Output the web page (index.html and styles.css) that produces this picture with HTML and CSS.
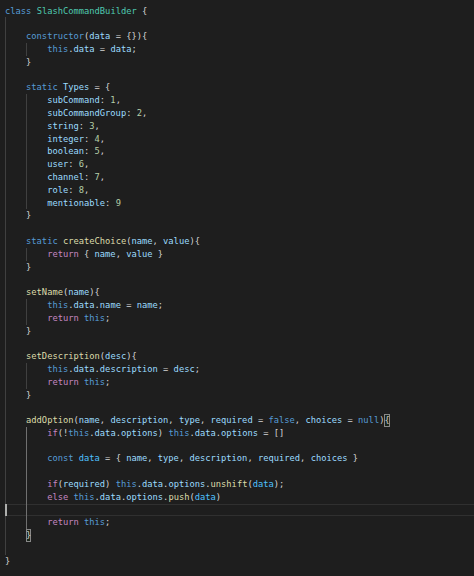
FILE: index.html
```html
<!DOCTYPE html>
<html>
<head>
<meta charset="utf-8">
<link rel="stylesheet" href="styles.css">
</head>
<body>
<div class="editor">
<div class="l"><span class="k">class</span> <span class="c">SlashCommandBuilder</span> {</div>
<div class="l"><span class="g">    </span></div>
<div class="l"><span class="g">    </span><span class="k">constructor</span>(<span class="v">data</span> = {}){</div>
<div class="l"><span class="g">    </span><span class="g">    </span><span class="k">this</span>.<span class="v">data</span> = <span class="v">data</span>;</div>
<div class="l"><span class="g">    </span>}</div>
<div class="l"><span class="g">    </span></div>
<div class="l"><span class="g">    </span><span class="k">static</span> <span class="v">Types</span> = {</div>
<div class="l"><span class="g">    </span><span class="g">    </span><span class="v">subCommand</span>: <span class="n">1</span>,</div>
<div class="l"><span class="g">    </span><span class="g">    </span><span class="v">subCommandGroup</span>: <span class="n">2</span>,</div>
<div class="l"><span class="g">    </span><span class="g">    </span><span class="v">string</span>: <span class="n">3</span>,</div>
<div class="l"><span class="g">    </span><span class="g">    </span><span class="v">integer</span>: <span class="n">4</span>,</div>
<div class="l"><span class="g">    </span><span class="g">    </span><span class="v">boolean</span>: <span class="n">5</span>,</div>
<div class="l"><span class="g">    </span><span class="g">    </span><span class="v">user</span>: <span class="n">6</span>,</div>
<div class="l"><span class="g">    </span><span class="g">    </span><span class="v">channel</span>: <span class="n">7</span>,</div>
<div class="l"><span class="g">    </span><span class="g">    </span><span class="v">role</span>: <span class="n">8</span>,</div>
<div class="l"><span class="g">    </span><span class="g">    </span><span class="v">mentionable</span>: <span class="n">9</span></div>
<div class="l"><span class="g">    </span>}</div>
<div class="l"><span class="g">    </span></div>
<div class="l"><span class="g">    </span><span class="k">static</span> <span class="f">createChoice</span>(<span class="v">name</span>, <span class="v">value</span>){</div>
<div class="l"><span class="g">    </span><span class="g">    </span><span class="p">return</span> { <span class="v">name</span>, <span class="v">value</span> }</div>
<div class="l"><span class="g">    </span>}</div>
<div class="l"><span class="g">    </span></div>
<div class="l"><span class="g">    </span><span class="f">setName</span>(<span class="v">name</span>){</div>
<div class="l"><span class="g">    </span><span class="g">    </span><span class="k">this</span>.<span class="v">data</span>.<span class="v">name</span> = <span class="v">name</span>;</div>
<div class="l"><span class="g">    </span><span class="g">    </span><span class="p">return</span> <span class="k">this</span>;</div>
<div class="l"><span class="g">    </span>}</div>
<div class="l"><span class="g">    </span></div>
<div class="l"><span class="g">    </span><span class="f">setDescription</span>(<span class="v">desc</span>){</div>
<div class="l"><span class="g">    </span><span class="g">    </span><span class="k">this</span>.<span class="v">data</span>.<span class="v">description</span> = <span class="v">desc</span>;</div>
<div class="l"><span class="g">    </span><span class="g">    </span><span class="p">return</span> <span class="k">this</span>;</div>
<div class="l"><span class="g">    </span>}</div>
<div class="l"><span class="g">    </span></div>
<div class="l"><span class="g">    </span><span class="f">addOption</span>(<span class="v">name</span>, <span class="v">description</span>, <span class="v">type</span>, <span class="v">required</span> = <span class="k">false</span>, <span class="v">choices</span> = <span class="k">null</span>)<span class="bm">{</span></div>
<div class="l"><span class="g">    </span><span class="g a">    </span><span class="p">if</span>(!<span class="k">this</span>.<span class="v">data</span>.<span class="v">options</span>) <span class="k">this</span>.<span class="v">data</span>.<span class="v">options</span> = []</div>
<div class="l"><span class="g">    </span><span class="g a">    </span></div>
<div class="l"><span class="g">    </span><span class="g a">    </span><span class="k">const</span> <span class="cn">data</span> = { <span class="v">name</span>, <span class="v">type</span>, <span class="v">description</span>, <span class="v">required</span>, <span class="v">choices</span> }</div>
<div class="l"><span class="g">    </span><span class="g a">    </span></div>
<div class="l"><span class="g">    </span><span class="g a">    </span><span class="p">if</span>(<span class="v">required</span>) <span class="k">this</span>.<span class="v">data</span>.<span class="v">options</span>.<span class="f">unshift</span>(<span class="cn">data</span>);</div>
<div class="l"><span class="g">    </span><span class="g a">    </span><span class="p">else</span> <span class="k">this</span>.<span class="v">data</span>.<span class="v">options</span>.<span class="f">push</span>(<span class="cn">data</span>)</div>
<div class="l cl"><span class="g cur">    </span><span class="g a">    </span></div>
<div class="l"><span class="g">    </span><span class="g a">    </span><span class="p">return</span> <span class="k">this</span>;</div>
<div class="l"><span class="g">    </span><span class="bm">}</span></div>
<div class="l"><span class="g">    </span></div>
<div class="l">}</div>
</div>
</body>
</html>
```

FILE: styles.css
```css
body {
  margin: 0;
  background: #1e1e1e;
}

.editor {
  padding: 4.6px 0 0 5px;
  font-family: "DejaVu Sans Mono", monospace;
  font-size: 8.75px;
  line-height: 12.81px;
  color: #d4d4d4;
}

.l {
  white-space: pre;
  height: 12.81px;
}

.g {
  display: inline-block;
  vertical-align: top;
  width: 4ch;
  height: 12.81px;
  box-shadow: inset 1px 0 #404040;
}

.g.a {
  box-shadow: inset 1px 0 #707070;
}

.g.cur {
  box-shadow: inset 2px 0 #aeafad;
}

.cl {
  box-shadow: inset 0 1px #303030, inset 0 -1px #303030;
}

.bm {
  display: inline-block;
  vertical-align: top;
  height: 12.81px;
  background: rgba(0, 100, 0, 0.1);
  box-shadow: inset 0 0 0 1px #888888;
}

.k { color: #569cd6; }
.c { color: #4ec9b0; }
.f { color: #dcdcaa; }
.v { color: #9cdcfe; }
.cn { color: #4fc1ff; }
.n { color: #b5cea8; }
.p { color: #c586c0; }
```
